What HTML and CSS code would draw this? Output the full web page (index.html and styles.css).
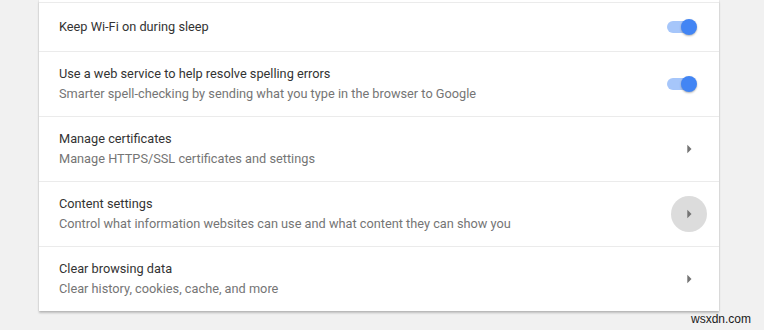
FILE: index.html
```html
<!DOCTYPE html>
<html>
<head>
<meta charset="utf-8">
<link rel="stylesheet" href="styles.css">
</head>
<body>
<div class="page">
  <div class="card">
    <div class="stub"></div>
    <div class="row single">
      <div class="text"><div class="title">Keep Wi-Fi on during sleep</div></div>
      <div class="toggle"><span class="bar"></span><span class="knob"></span></div>
    </div>
    <div class="row">
      <div class="text">
        <div class="title">Use a web service to help resolve spelling errors</div>
        <div class="sub">Smarter spell-checking by sending what you type in the browser to Google</div>
      </div>
      <div class="toggle"><span class="bar"></span><span class="knob"></span></div>
    </div>
    <div class="row">
      <div class="text">
        <div class="title">Manage certificates</div>
        <div class="sub">Manage HTTPS/SSL certificates and settings</div>
      </div>
      <div class="arrow"><svg width="20" height="20" viewBox="0 0 24 24"><path d="M10 17l5-5-5-5v10z"/></svg></div>
    </div>
    <div class="row">
      <div class="text">
        <div class="title">Content settings</div>
        <div class="sub">Control what information websites can use and what content they can show you</div>
      </div>
      <div class="arrow hover"><svg width="20" height="20" viewBox="0 0 24 24"><path d="M10 17l5-5-5-5v10z"/></svg></div>
    </div>
    <div class="row last">
      <div class="text">
        <div class="title">Clear browsing data</div>
        <div class="sub">Clear history, cookies, cache, and more</div>
      </div>
      <div class="arrow"><svg width="20" height="20" viewBox="0 0 24 24"><path d="M10 17l5-5-5-5v10z"/></svg></div>
    </div>
  </div>
  <div class="watermark">wsxdn.com</div>
</div>
</body>
</html>
```
FILE: styles.css
```css
html, body {
  margin: 0;
  padding: 0;
  background: #f1f1f1;
  font-family: Roboto, "Liberation Sans", sans-serif;
}
.page {
  position: relative;
  width: 764px;
  height: 330px;
  overflow: hidden;
}
.card {
  margin-left: 39px;
  width: 680px;
  background: #fff;
  box-shadow: 0 2px 2px rgba(0,0,0,0.22), 0 0 1px rgba(0,0,0,0.18);
}
.stub {
  height: 2px;
  border-bottom: 1px solid #ebebeb;
}
.row {
  display: flex;
  align-items: center;
  height: 64px;
  padding: 0 12px 0 20px;
  border-bottom: 1px solid #ebebeb;
}
.row.single {
  height: 48px;
}
.row.last {
  border-bottom: none;
}
.text {
  flex: 1;
  font-size: 12.75px;
  line-height: 20px;
}
.title {
  color: #333;
}
.sub {
  color: #757575;
}
.toggle {
  position: relative;
  width: 32px;
  height: 16px;
  margin-right: 9px;
}
.bar {
  position: absolute;
  left: 1px;
  top: 2px;
  width: 26px;
  height: 12px;
  border-radius: 6px;
  background: #a6c6fa;
}
.knob {
  position: absolute;
  left: 15px;
  top: 0;
  width: 16px;
  height: 16px;
  border-radius: 50%;
  background: #4285f4;
  box-shadow: 0 1px 2px rgba(0,0,0,0.3);
}
.arrow {
  width: 36px;
  height: 36px;
  border-radius: 50%;
  display: flex;
  align-items: center;
  justify-content: center;
  fill: #737373;
}
.arrow svg {
  display: block;
}
.arrow.hover {
  background: #dcdcdc;
}
.watermark {
  position: absolute;
  left: 691px;
  top: 312px;
  font-family: "Liberation Sans", Arial, sans-serif;
  font-size: 12px;
  color: #1a1a1a;
}
```
